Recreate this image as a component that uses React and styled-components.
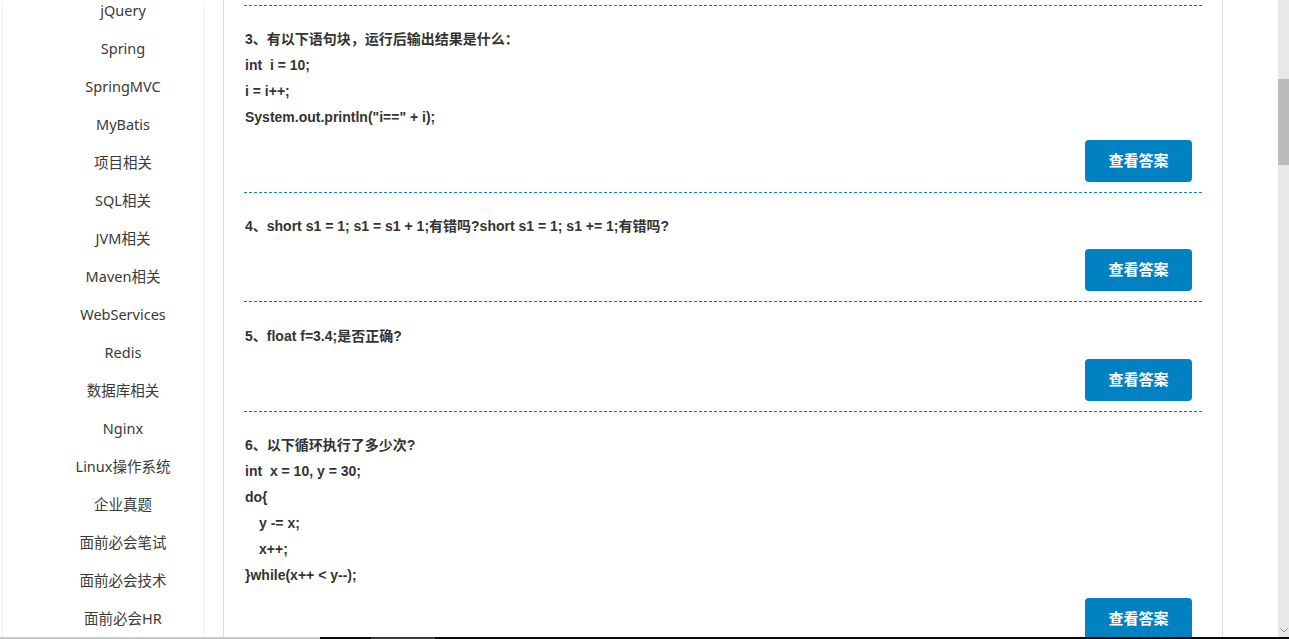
import React from "react";
import styled, { createGlobalStyle } from "styled-components";

const GlobalStyle = createGlobalStyle`
  html, body {
    margin: 0;
    padding: 0;
    background: #fff;
    overflow: hidden;
  }
  body {
    font-family: "Liberation Sans", Arial, "Noto Sans CJK SC", sans-serif;
  }
`;

const Page = styled.div`
  display: flex;
  align-items: flex-start;
  width: 1278px;
  height: 639px;
  overflow: hidden;
`;

const Sidebar = styled.nav`
  width: 200px;
  height: 700px;
  margin-left: 3px;
  background: #fff;
  box-shadow: 0 0 3px rgba(0, 0, 0, 0.12);
  flex-shrink: 0;
`;

const Menu = styled.ul`
  list-style: none;
  margin: -9px 0 0;
  padding: 0 0 0 40px;
`;

const MenuItem = styled.li`
  height: 38px;
  line-height: 38px;
  text-align: center;
  font-family: "Noto Sans", "Noto Sans CJK SC", sans-serif;
  font-size: 14.5px;
  color: #3a3a3a;
`;

const Main = styled.main`
  width: 958px;
  margin-left: 20px;
  padding: 5px 20px 0;
  border-left: 1px solid #dcdcdc;
  border-right: 1px solid #dcdcdc;
  min-height: 700px;
  flex-shrink: 0;
`;

const Question = styled.section`
  border-top: 1px dashed ${p => p.$line || "#0a7dc0"};
  padding: ${p => p.$pt || 20}px 0 10px;
`;

const Line = styled.p`
  margin: 0;
  line-height: 26px;
  height: 26px;
  padding-left: ${p => (p.$indent ? "15px" : "1px")};
  font-size: 14px;
  font-weight: bold;
  color: #333;
  white-space: pre;
`;

const Actions = styled.div`
  display: flex;
  justify-content: flex-end;
  margin-top: 10px;
  padding-right: 10px;
`;

const AnswerButton = styled.button`
  width: 107px;
  height: 42px;
  padding: 0 0 3px;
  border: none;
  border-radius: 4px;
  background: #0081c2;
  color: #fff;
  font-family: "Noto Sans CJK SC", sans-serif;
  font-size: 15px;
  font-weight: bold;
  cursor: pointer;
`;

const ScrollTrack = styled.div`
  position: fixed;
  top: 0;
  right: 0;
  width: 11px;
  height: 637px;
  background: #e8e8e8;
`;

const ScrollThumb = styled.div`
  margin-top: 79px;
  height: 86px;
  background: #bcbcbc;
`;

const ScrollArrow = styled.svg`
  position: absolute;
  bottom: 4px;
  left: 2px;
`;

const Taskbar = styled.div`
  position: fixed;
  left: 0;
  bottom: 0;
  width: 100%;
  height: 2px;
  display: flex;
`;

const TaskSeg = styled.div`
  width: ${p => p.$w || "auto"};
  flex: ${p => (p.$w ? "none" : 1)};
  background: ${p => p.$c};
`;

const menu = [
  "jQuery", "Spring", "SpringMVC", "MyBatis", "项目相关", "SQL相关", "JVM相关",
  "Maven相关", "WebServices", "Redis", "数据库相关", "Nginx", "Linux操作系统",
  "企业真题", "面前必会笔试", "面前必会技术", "面前必会HR",
];

const questions = [
  {
    line: "#2f6f99",
    pt: 20,
    lines: [
      ["3、有以下语句块，运行后输出结果是什么："],
      ["int  i = 10;"],
      ["i = i++;"],
      ["System.out.println(\"i==\" + i);"],
    ],
  },
  {
    line: "#0a86cc",
    pt: 20,
    lines: [["4、short s1 = 1; s1 = s1 + 1;有错吗?short s1 = 1; s1 += 1;有错吗?"]],
  },
  {
    line: "#33688c",
    pt: 21,
    lines: [["5、float f=3.4;是否正确?"]],
  },
  {
    line: "#33688c",
    pt: 20,
    lines: [
      ["6、以下循环执行了多少次?"],
      ["int  x = 10, y = 30;"],
      ["do{"],
      ["y -= x;", true],
      ["x++;", true],
      ["}while(x++ < y--);"],
    ],
  },
];

export default function App() {
  return (
    <>
      <GlobalStyle />
      <Page>
        <Sidebar>
          <Menu>
            {menu.map(m => (
              <MenuItem key={m}>{m}</MenuItem>
            ))}
          </Menu>
        </Sidebar>
        <Main>
          {questions.map((q, i) => (
            <Question key={i} $line={q.line} $pt={q.pt}>
              {q.lines.map(([t, indent], j) => (
                <Line key={j} $indent={indent}>{t}</Line>
              ))}
              <Actions>
                <AnswerButton>查看答案</AnswerButton>
              </Actions>
            </Question>
          ))}
        </Main>
      </Page>
      <ScrollTrack>
        <ScrollThumb />
        <ScrollArrow width="8" height="5" viewBox="0 0 8 5">
          <path d="M0.5 0.5 L4 4 L7.5 0.5" fill="none" stroke="#8a8a8a" strokeWidth="1" />
        </ScrollArrow>
      </ScrollTrack>
      <Taskbar>
        <TaskSeg $w="320px" $c="#c8c8c8" />
        <TaskSeg $w="51px" $c="#0a0a0a" />
        <TaskSeg $w="64px" $c="#3a3a3a" />
        <TaskSeg $c="#0a0a0a" />
      </Taskbar>
    </>
  );
}
